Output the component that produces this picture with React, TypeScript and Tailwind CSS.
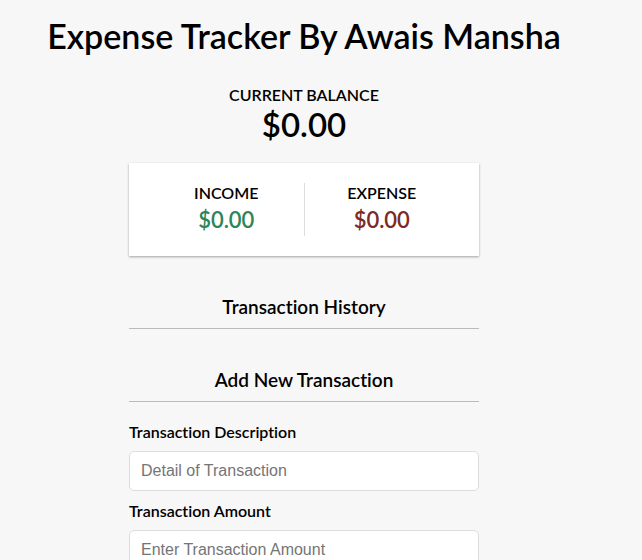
import React from "react";

function SectionHeading({ children }: { children: React.ReactNode }) {
  return (
    <h3 className="mt-10 border-b border-[#bbbbbb] pb-2.5 text-[19px] leading-[22px]">{children}</h3>
  );
}

function Total({ label, amount, className }: { label: string; amount: string; className: string }) {
  return (
    <div className="flex-1">
      <h4 className="leading-5 uppercase">{label}</h4>
      <p className={`pt-[5px] pb-1 text-[22px] leading-6 ${className}`}>{amount}</p>
    </div>
  );
}

function Field({ id, label, ...input }: { id: string; label: string; type: string; placeholder: string }) {
  return (
    <div className="mb-2 text-left">
      <label htmlFor={id} className="mb-[7px] block leading-6">
        {label}
      </label>
      <input
        id={id}
        {...input}
        className="block h-10 w-full rounded-[5px] border border-[#dddddd] bg-white px-[11px] font-['Liberation_Sans',Arial,sans-serif] text-base font-normal placeholder:text-[#757575]"
      />
    </div>
  );
}

export default function App() {
  return (
    <div className="min-h-screen bg-[#f7f7f7] pt-3 pr-[34px] pb-10 text-center font-['Lato',sans-serif] text-base font-semibold text-black [font-variant-ligatures:no-common-ligatures]">
      <h1 className="text-[34px] leading-[48px]">Expense Tracker By Awais Mansha</h1>
      <main className="mx-auto mt-6 w-full max-w-[350px]">
        <h4 className="leading-[22px] uppercase">Current Balance</h4>
        <p className="text-[33px] leading-9">$0.00</p>

        <section className="mt-[21px] flex bg-white p-5 shadow-[0_1px_3px_rgba(0,0,0,0.12),0_1px_2px_rgba(0,0,0,0.24)]">
          <Total label="Income" amount="$0.00" className="text-[#2e8555]" />
          <div className="w-px bg-[#dddddd]" />
          <Total label="Expense" amount="$0.00" className="text-[#7f2a20]" />
        </section>

        <SectionHeading>Transaction History</SectionHeading>
        <SectionHeading>Add New Transaction</SectionHeading>

        <form className="mt-[18px]">
          <Field id="description" label="Transaction Description" type="text" placeholder="Detail of Transaction" />
          <Field id="amount" label="Transaction Amount" type="number" placeholder="Enter Transaction Amount" />
        </form>
      </main>
    </div>
  );
}
